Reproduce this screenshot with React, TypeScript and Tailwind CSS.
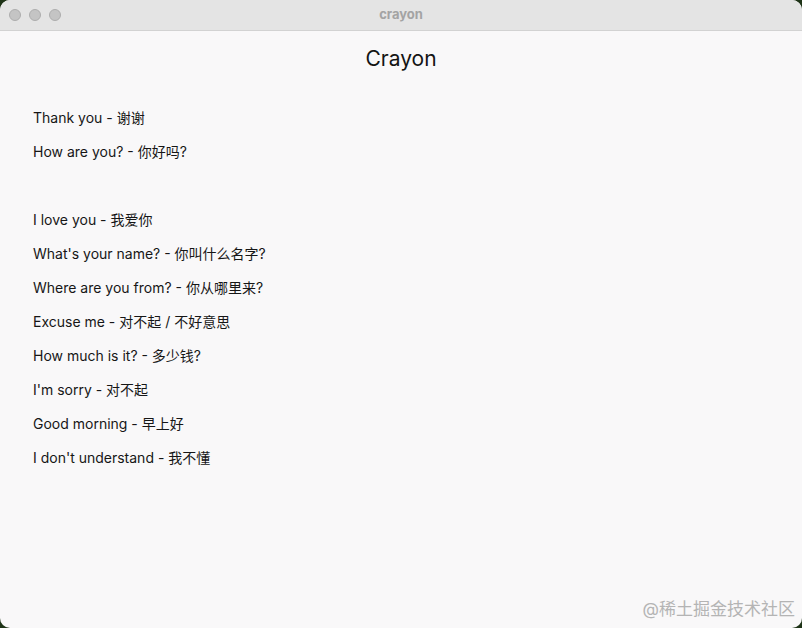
import React from 'react';

const phrases: string[] = [
  'Thank you - 谢谢',
  'How are you? - 你好吗?',
  '',
  'I love you - 我爱你',
  "What's your name? - 你叫什么名字?",
  'Where are you from? - 你从哪里来?',
  'Excuse me - 对不起 / 不好意思',
  'How much is it? - 多少钱?',
  "I'm sorry - 对不起",
  'Good morning - 早上好',
  "I don't understand - 我不懂",
];

export default function App() {
  return (
    <div className="w-[802px] h-[628px] bg-[#1e3317] overflow-hidden">
      <div
        className="relative w-full h-full rounded-[10px] overflow-hidden bg-[#f9f8f9] flex flex-col"
        style={{ fontFamily: 'Inter, "Noto Sans CJK SC", sans-serif' }}
      >
        {/* title bar */}
        <div className="relative h-[31px] shrink-0 bg-[#e4e4e4] border-b border-[#d2d2d2] flex items-center">
          <div className="flex gap-[8px] pl-[9px]">
            <span className="w-[12px] h-[12px] rounded-full bg-[#c4c4c4] border border-[#adadad]" />
            <span className="w-[12px] h-[12px] rounded-full bg-[#c4c4c4] border border-[#adadad]" />
            <span className="w-[12px] h-[12px] rounded-full bg-[#c4c4c4] border border-[#adadad]" />
          </div>
          <div className="absolute inset-0 flex items-center justify-center text-[13px] font-bold text-[#a3a3a3]">
            crayon
          </div>
        </div>

        {/* content */}
        <div className="flex flex-col">
          <h1 className="mt-[14px] h-[28px] leading-[28px] text-center text-[21px] text-[#141414]">Crayon</h1>
          <ul className="mt-[27px] pl-[33px] flex flex-col">
            {phrases.map((p, i) => (
              <li key={i} className="h-[34px] flex items-center text-[14px] text-[#161616]">
                {p}
              </li>
            ))}
          </ul>
        </div>

        <div className="absolute right-[7px] bottom-[6px] text-[17px] text-[#b4b4b4]">@稀土掘金技术社区</div>
      </div>
    </div>
  );
}
